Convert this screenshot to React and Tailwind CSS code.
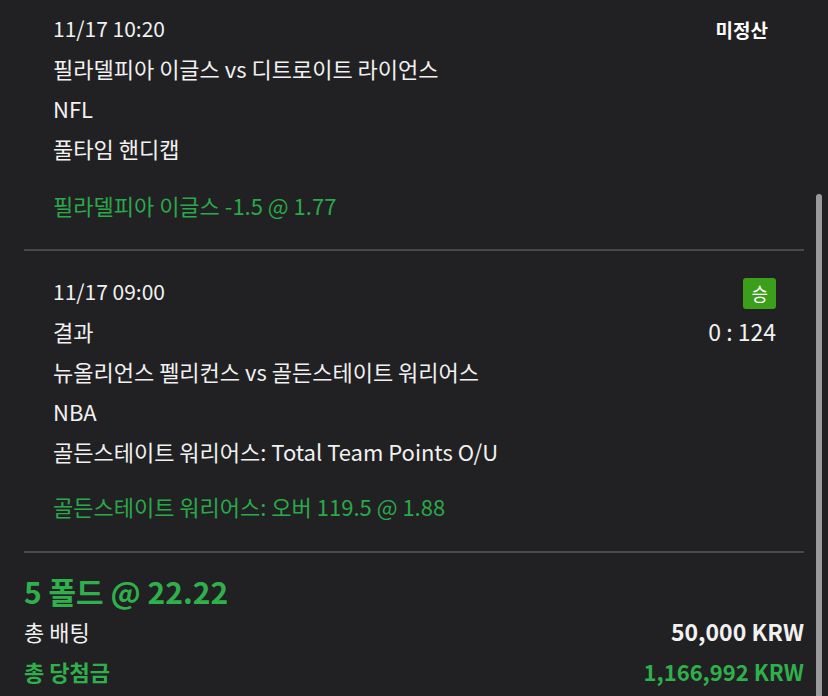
const font = { fontFamily: '"Noto Sans CJK KR", "Noto Sans", sans-serif' };

const bets = [
  {
    time: "11/17 10:20",
    status: "미정산",
    lines: ["필라델피아 이글스 vs 디트로이트 라이언스", "NFL", "풀타임 핸디캡"],
    pick: "필라델피아 이글스 -1.5 @ 1.77",
  },
  {
    time: "11/17 09:00",
    status: "승",
    score: "0 : 124",
    lines: ["뉴올리언스 펠리컨스 vs 골든스테이트 워리어스", "NBA", "골든스테이트 워리어스: Total Team Points O/U"],
    pick: "골든스테이트 워리어스: 오버 119.5 @ 1.88",
  },
];

function BetItem({ bet, first }) {
  return (
    <div className={`${first ? "pt-[10px] pb-[22px]" : "pt-[22px] pb-[23px]"} pl-[29px] pr-[28px] border-b-2 border-[#48484a]`}>
      <div className="flex items-center justify-between h-10">
        <span className="text-[21px] pb-[2px]">{bet.time}</span>
        {bet.status === "승" ? (
          <span className="bg-[#3c9f1b] rounded-[3px] px-2 h-[31px] flex items-center text-[18px] text-white">승</span>
        ) : (
          <span className="px-2 text-[19px] font-bold text-white">{bet.status}</span>
        )}
      </div>
      {bet.score ? (
        <div className="flex items-center justify-between h-10 pb-1">
          <span>결과</span>
          <span className="text-[23px]">{bet.score}</span>
        </div>
      ) : null}
      {bet.lines.map((l) => (
        <div key={l} className="h-10 flex items-center pb-1">{l}</div>
      ))}
      <div className={`${first ? "mt-[17px]" : "mt-[15px]"} h-10 flex items-center pb-1 text-[#2ba84a]`}>{bet.pick}</div>
    </div>
  );
}

export default function App() {
  return (
    <div style={font} className="w-full h-[696px] overflow-hidden bg-[#212123] text-[#f1f1f1] text-[22px] flex">
      <div className="w-[780px] ml-6 shrink-0">
        {bets.map((b, i) => (
          <BetItem key={b.time} bet={b} first={i === 0} />
        ))}
        <div className="pt-5">
          <div className="h-10 flex items-center pb-1 text-[30px] font-bold text-[#2fb04c]">5 폴드 @ 22.22</div>
          <div className="h-10 flex items-center justify-between pb-1">
            <span>총 배팅</span>
            <span className="font-bold text-[23px]">50,000 KRW</span>
          </div>
          <div className="h-10 flex items-center justify-between pb-1 font-bold text-[#2fb04c]">
            <span>총 당첨금</span>
            <span>1,166,992 KRW</span>
          </div>
        </div>
      </div>
      <div className="ml-3 w-1.5 mt-[194px] bg-[#9a9a9a] rounded-t-[3px] shrink-0" />
    </div>
  );
}
